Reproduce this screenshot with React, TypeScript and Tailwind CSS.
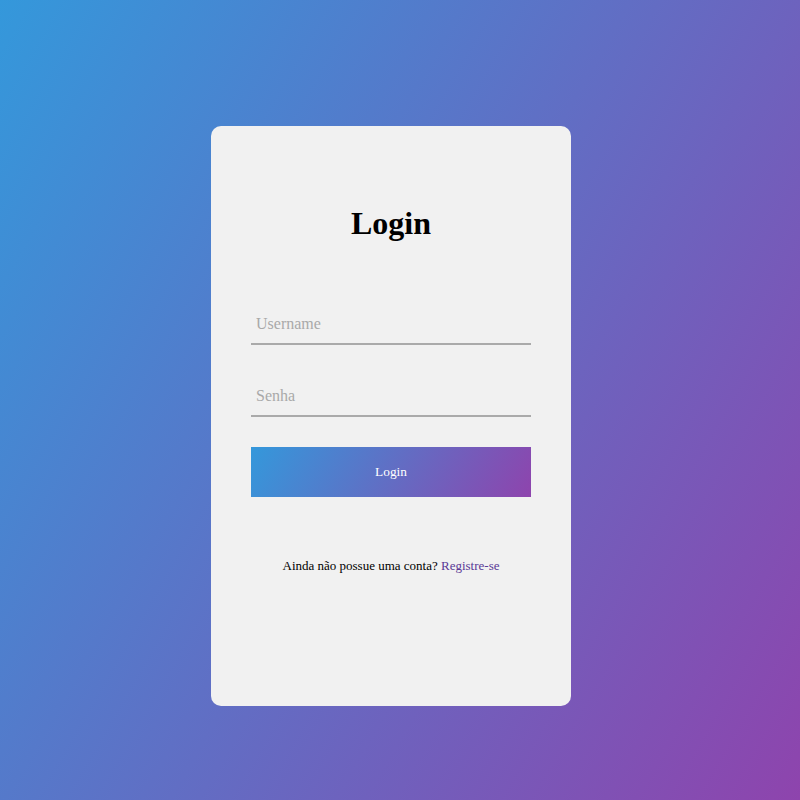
export default function App() {
  return (
    <div className="min-h-screen bg-[linear-gradient(120deg,#3498db,#8e44ad)] pt-[126px] pl-[211px] font-['Liberation_Serif',serif]">
      <div className="w-[360px] h-[580px] rounded-[10px] bg-[#f1f1f1] px-10 pt-[80px]">
        <h1 className="text-center text-[32px] font-bold leading-[35px] text-black">Login</h1>

        <form className="mt-[64px] flex flex-col" onSubmit={(e) => e.preventDefault()}>
          <input
            type="text"
            placeholder="Username"
            className="h-10 w-full border-b-2 border-[#aaaaaa] bg-transparent px-[5px] text-base text-black outline-none placeholder:text-[#a9a9a9]"
          />
          <input
            type="password"
            placeholder="Senha"
            className="mt-8 h-10 w-full border-b-2 border-[#aaaaaa] bg-transparent px-[5px] text-base text-black outline-none placeholder:text-[#a9a9a9]"
          />
          <button
            type="submit"
            className="mt-[30px] h-[50px] w-full bg-[linear-gradient(120deg,#3498db,#8e44ad)] text-[13.33px] text-white"
          >
            Login
          </button>
        </form>

        <p className="mt-[59px] text-center text-[13px] text-black">
          Ainda não possue uma conta?{' '}
          <a href="#" className="text-[#5a3996]">
            Registre-se
          </a>
        </p>
      </div>
    </div>
  );
}
